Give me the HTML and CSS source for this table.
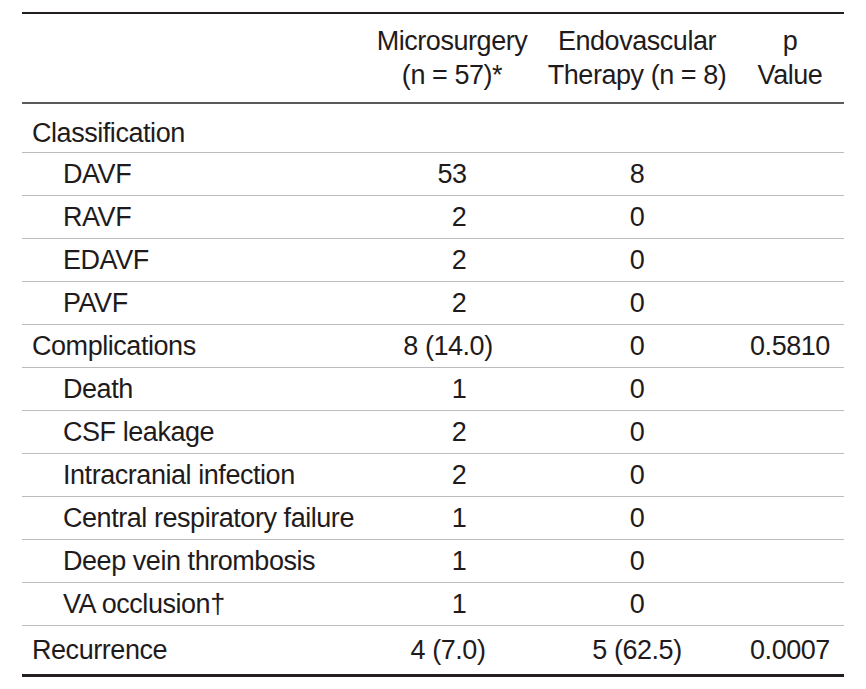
FILE: index.html
```html
<!DOCTYPE html>
<html>
<head>
<meta charset="utf-8">
<link rel="stylesheet" href="styles.css">
</head>
<body>
<table class="tbl">
  <colgroup>
    <col class="c-label"><col class="c-micro"><col class="c-endo"><col class="c-p">
  </colgroup>
  <thead>
    <tr>
      <th></th>
      <th>Microsurgery<br>(n = 57)*</th>
      <th>Endovascular<br>Therapy (n = 8)</th>
      <th>p<br>Value</th>
    </tr>
  </thead>
  <tbody>
    <tr class="group first"><td>Classification</td><td></td><td></td><td></td></tr>
    <tr><td class="sub">DAVF</td><td>53</td><td>8</td><td></td></tr>
    <tr><td class="sub">RAVF</td><td class="one">2</td><td>0</td><td></td></tr>
    <tr><td class="sub">EDAVF</td><td class="one">2</td><td>0</td><td></td></tr>
    <tr><td class="sub">PAVF</td><td class="one">2</td><td>0</td><td></td></tr>
    <tr class="group"><td>Complications</td><td class="pct">8 (14.0)</td><td>0</td><td>0.5810</td></tr>
    <tr><td class="sub">Death</td><td class="one">1</td><td>0</td><td></td></tr>
    <tr><td class="sub">CSF leakage</td><td class="one">2</td><td>0</td><td></td></tr>
    <tr><td class="sub">Intracranial infection</td><td class="one">2</td><td>0</td><td></td></tr>
    <tr><td class="sub">Central respiratory failure</td><td class="one">1</td><td>0</td><td></td></tr>
    <tr><td class="sub">Deep vein thrombosis</td><td class="one">1</td><td>0</td><td></td></tr>
    <tr><td class="sub">VA occlusion†</td><td class="one">1</td><td>0</td><td></td></tr>
    <tr class="group last"><td>Recurrence</td><td class="pct">4 (7.0)</td><td>5 (62.5)</td><td>0.0007</td></tr>
  </tbody>
</table>
</body>
</html>
```
FILE: styles.css
```css
html, body {
  margin: 0;
  padding: 0;
  background: #ffffff;
}
body {
  padding: 12px 0 0 22px;
  font-family: "Liberation Sans", Arial, sans-serif;
  color: #1f1b1c;
}
.tbl {
  border-collapse: collapse;
  width: 822px;
  table-layout: fixed;
  font-size: 27px;
  letter-spacing: -0.45px;
  border-top: 2px solid #231f20;
  border-bottom: 3px solid #231f20;
}
.c-label { width: 344px; }
.c-micro { width: 172px; }
.c-endo { width: 198px; }
.c-p { width: 108px; }
.tbl th {
  font-weight: normal;
  text-align: center;
  line-height: 34px;
  padding: 10px 0 10px 0;
  height: 68px;
  border-bottom: 2px solid #5a5a5a;
  vertical-align: middle;
  white-space: nowrap;
}
.tbl td {
  height: 42px;
  padding: 0;
  text-align: center;
  vertical-align: middle;
  border-bottom: 1px solid #bcbcbc;
  line-height: 30px;
  white-space: nowrap;
}
.tbl td:first-child {
  text-align: left;
  padding-left: 10px;
}
.tbl td.sub {
  padding-left: 41px;
}
.tbl tr.first td {
  height: 38px;
  padding-top: 10px;
}
.tbl tr.last td {
  height: 48px;
  border-bottom: none;
}
.tbl td.one {
  padding-left: 14px;
}
.tbl td.pct {
  padding-right: 8px;
}
```
